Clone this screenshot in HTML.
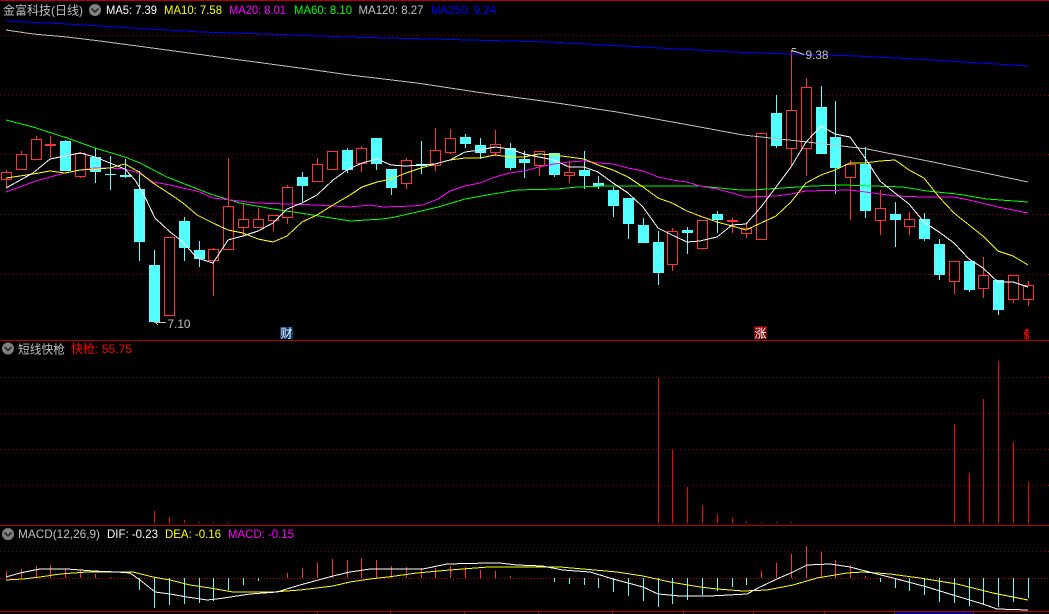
<!DOCTYPE html>
<html lang="zh"><head><meta charset="utf-8"><title>金富科技(日线)</title>
<style>
html,body{margin:0;padding:0;background:#000;width:1049px;height:614px;overflow:hidden}
svg{display:block;position:absolute;left:0;top:0}
text{font-family:"Liberation Sans","Noto Sans CJK SC",sans-serif;font-size:12px}
</style></head><body>
<svg width="1049" height="614" viewBox="0 0 1049 614" xmlns="http://www.w3.org/2000/svg">
<rect width="1049" height="614" fill="#000"/>
<g shape-rendering="crispEdges">
<path d="M0 35.5H1049M0 95.5H1049M0 154.5H1049M0 214.5H1049M0 274.5H1049M0 377.5H1049M0 413.5H1049M0 449.5H1049M0 485.5H1049M0 551.5H1049" stroke="#8a0000" stroke-dasharray="1 3" fill="none"/>
<path d="M0 578.5H1049" stroke="#b40000" stroke-dasharray="1 2" fill="none"/>
<path d="M0 .5H1049M0 340.5H1049M0 525.5H1049M0 611.5H1049" stroke="#b40000" fill="none"/>
<path d="M317.5 612V614M390.5 612V614M464.5 612V614M538.5 612V614M612.5 612V614M683.5 612V614M753.5 612V614M824.5 612V614M894.5 612V614M973.5 612V614" stroke="#b40000" fill="none"/>
<rect x="896" y="612" width="77" height="2" fill="#000080"/>

<!-- red wicks -->
<path fill="none" stroke="#ff3232" d="M6.5 170V188M21.5 151V169M36.5 136V159M50.5 136V158M80.5 152V178M213.5 248V296M228.5 158V249M243.5 203V236M258.5 208V227M273.5 215V231M287.5 185V224M317.5 158V181M361.5 146V172M406.5 158V189M435.5 128V171M450.5 129V154M495.5 130V156M539.5 151V176M569.5 161V183M672.5 228V271M732.5 218V233M746.5 222V238M791.5 50V166M806.5 78V176M850.5 160V220M880.5 190V235M909.5 212V235M954.5 261V294M983.5 257V298M1013.5 275V303M1028.5 281V306"/>
<!-- cyan wicks -->
<path fill="none" stroke="#54ffff" d="M65.5 140V171M95.5 148V183M110.5 156V190M125.5 159V178M139.5 171V261M154.5 250V322M184.5 217V261M199.5 241V267M302.5 172V202M347.5 148V173M376.5 138V170M391.5 169V195M421.5 141V174M465.5 134V148M480.5 138V159M510.5 143V170M524.5 151V178M554.5 153V177M584.5 151V189M598.5 176V189M613.5 187V217M628.5 198V239M643.5 218V243M658.5 231V285M687.5 227V254M717.5 211V233M776.5 95V148M821.5 86V154M835.5 101V194M865.5 147V218M895.5 202V247M924.5 213V241M939.5 239V280M969.5 261V292M998.5 280V315"/>
<!-- red bodies -->
<g fill="#000" stroke="#ff3232">
<rect x="1.5" y="172.5" width="10" height="7"/><rect x="16.5" y="154.5" width="10" height="15"/><rect x="31.5" y="139.5" width="10" height="20"/>
<rect x="75.5" y="153.5" width="10" height="23"/><rect x="164.5" y="237.5" width="10" height="78"/><rect x="208.5" y="249.5" width="10" height="11"/>
<rect x="223.5" y="206.5" width="10" height="43"/><rect x="238.5" y="219.5" width="10" height="8"/><rect x="253.5" y="219.5" width="10" height="8"/>
<rect x="268.5" y="215.5" width="10" height="5"/><rect x="282.5" y="187.5" width="10" height="30"/><rect x="312.5" y="164.5" width="10" height="17"/>
<rect x="327.5" y="151.5" width="10" height="18"/><rect x="356.5" y="148.5" width="10" height="15"/><rect x="401.5" y="160.5" width="10" height="23"/>
<rect x="430.5" y="150.5" width="10" height="15"/><rect x="445.5" y="138.5" width="10" height="14"/><rect x="490.5" y="144.5" width="10" height="8"/>
<rect x="534.5" y="151.5" width="10" height="14"/><rect x="564.5" y="172.5" width="10" height="3"/><rect x="667.5" y="231.5" width="10" height="33"/>
<rect x="697.5" y="220.5" width="10" height="28"/><rect x="741.5" y="228.5" width="10" height="5"/><rect x="756.5" y="133.5" width="10" height="106"/>
<rect x="786.5" y="110.5" width="10" height="38"/><rect x="801.5" y="87.5" width="10" height="61"/><rect x="845.5" y="164.5" width="10" height="13"/>
<rect x="875.5" y="208.5" width="10" height="12"/><rect x="904.5" y="219.5" width="10" height="7"/><rect x="949.5" y="261.5" width="10" height="20"/>
<rect x="978.5" y="275.5" width="10" height="13"/><rect x="1008.5" y="275.5" width="10" height="24"/><rect x="1023.5" y="285.5" width="10" height="14"/>
</g>
<!-- red doji -->
<g fill="#ff3232"><rect x="45" y="144" width="11" height="2"/><rect x="727" y="220" width="11" height="2"/></g>
<!-- cyan bodies -->
<g fill="#54ffff">
<rect x="60" y="141" width="11" height="30"/><rect x="90" y="157" width="11" height="15"/><rect x="105" y="174" width="11" height="1"/>
<rect x="120" y="175" width="11" height="2"/><rect x="134" y="189" width="11" height="53"/><rect x="149" y="265" width="11" height="57"/>
<rect x="179" y="221" width="11" height="27"/><rect x="194" y="250" width="11" height="9"/><rect x="297" y="177" width="11" height="9"/>
<rect x="342" y="150" width="11" height="20"/><rect x="371" y="138" width="11" height="26"/><rect x="386" y="169" width="11" height="19"/>
<rect x="416" y="164" width="11" height="2"/><rect x="460" y="137" width="11" height="7"/><rect x="475" y="145" width="11" height="8"/>
<rect x="505" y="148" width="11" height="20"/><rect x="519" y="159" width="11" height="4"/><rect x="549" y="153" width="11" height="22"/>
<rect x="579" y="170" width="11" height="6"/><rect x="593" y="183" width="11" height="3"/><rect x="608" y="190" width="11" height="16"/>
<rect x="623" y="198" width="11" height="26"/><rect x="638" y="225" width="11" height="18"/><rect x="653" y="242" width="11" height="31"/>
<rect x="682" y="230" width="11" height="3"/><rect x="712" y="214" width="11" height="6"/><rect x="771" y="113" width="11" height="33"/>
<rect x="816" y="107" width="11" height="47"/><rect x="830" y="137" width="11" height="31"/><rect x="860" y="164" width="11" height="47"/>
<rect x="890" y="214" width="11" height="6"/><rect x="919" y="219" width="11" height="20"/><rect x="934" y="244" width="11" height="31"/>
<rect x="964" y="261" width="11" height="29"/><rect x="993" y="280" width="11" height="30"/>
</g>

<!-- main MAs -->
<g fill="none" stroke-width="1">
<polyline stroke="#0000ff" points="6,21 67,24 133,28 200,32 267,34 347,37 430,39 550,42 697,50 733,52 790,54 857,56 933,60 1028,66"/>
<polyline stroke="#c0c0c0" points="6,30 33,34 67,37 100,41 167,50 233,59 300,68 350,75 417,83 483,93 550,102 617,112 700,127 743,135 807,142 867,149 933,162 1028,182"/>
<polyline stroke="#00ff00" points="6,120 33,127 67,138 95,148 125,157 140,163 167,177 200,190 213,195 240,203 273,209 300,213 350,221 383,219 395,217 417,212 438,207 465,199 493,194 517,190 557,189 577,187 607,186 680,186 700,186 720,188 740,190 753,190 783,188 813,186 843,185 873,186 903,187 927,191 957,194 987,199 1028,202"/>
<polyline stroke="#ff00ff" points="6,192 20,187 33,182 50,177 65,173 80,170 95,168 110,168 125,169 139,173 153,182 170,185 183,188 200,192 213,198 257,203 287,204 317,205 350,207 370,205 383,207 413,206 423,205 438,199 450,191 465,186 480,183 495,177 510,173 524,171 539,167 554,164 569,162 584,161 598,163 613,164 628,168 643,171 658,177 672,180 687,182 700,186 717,189 732,193 746,197 776,196 791,194 806,191 850,190 873,193 895,196 924,197 954,197 969,200 998,207 1028,213"/>
<polyline stroke="#ffff00" points="6,178 20,176 33,174 50,171 65,173 80,170 95,169 110,168 125,164 139,172 153,183 170,194 183,203 197,215 213,223 228,230 243,233 258,239 273,242 287,236 302,222 317,215 333,205 350,195 362,187 377,182 391,179 406,173 421,168 435,164 450,160 465,158 480,158 495,155 510,157 524,157 539,154 554,155 569,157 584,159 598,165 613,170 628,177 643,187 658,198 672,203 687,211 700,216 717,222 732,226 746,230 761,223 776,216 791,202 806,183 821,175 835,170 850,163 865,163 880,161 895,160 909,170 924,178 939,197 954,213 969,225 983,236 998,251 1013,256 1028,265"/>
<polyline stroke="#ffffff" points="6,188 33,173 50,159 60,157 80,153 95,157 110,163 125,169 135,180 143,193 155,218 170,232 183,242 197,258 213,263 228,240 243,236 258,231 273,223 287,209 302,203 317,195 333,180 347,170 362,163 377,159 391,165 406,166 421,165 435,164 450,160 465,152 480,150 495,147 510,149 524,154 539,157 554,160 569,167 584,167 598,172 613,183 628,193 643,207 658,228 672,235 687,242 700,241 717,237 732,225 746,224 761,207 776,187 791,167 806,142 821,126 835,134 850,137 865,158 880,181 895,193 909,204 924,222 939,232 954,243 969,259 983,268 998,282 1013,282 1028,287"/>
</g>

<!-- 快枪 bars -->
<path fill="none" stroke="#ff0000" d="M154.5 511V523M169.5 517V523M184.5 520V523M199.5 522V523M213.5 522V523M228.5 522V523M658.5 378V523M672.5 450V523M687.5 487V523M702.5 505V523M717.5 514V523M732.5 518V523M746.5 521V523M761.5 522V523M776.5 522V523M791.5 522V523M954.5 424V523M969.5 473V523M983.5 399V523M998.5 361V523M1013.5 442V523M1028.5 482V523"/>

<!-- MACD bars -->
<path fill="none" stroke="#ff3232" d="M6.5 571V578M21.5 569V578M36.5 566V578M50.5 565V578M65.5 569V578M80.5 570V578M95.5 574V578M110.5 577V578M287.5 573V578M302.5 568V578M317.5 563V578M332.5 559V578M347.5 560V578M361.5 558V578M376.5 560V578M391.5 566V578M406.5 567V578M421.5 568V578M435.5 568V578M450.5 566V578M465.5 567V578M480.5 570V578M495.5 571V578M510.5 576V578M761.5 571V578M776.5 563V578M791.5 554V578M806.5 546V578M821.5 552V578M835.5 560V578M850.5 565V578M865.5 576V578"/>
<path fill="none" stroke="#54ffff" d="M139.5 578V590M154.5 578V608M169.5 578V605M184.5 578V604M199.5 578V603M213.5 578V601M228.5 578V590M243.5 578V585M258.5 578V581M554.5 578V582M569.5 578V584M584.5 578V585M598.5 578V588M613.5 578V592M628.5 578V596M643.5 578V601M658.5 578V607M672.5 578V604M687.5 578V600M702.5 578V595M717.5 578V591M732.5 578V587M746.5 578V585M880.5 578V582M895.5 578V588M909.5 578V591M924.5 578V595M939.5 578V602M954.5 578V603M969.5 578V606M983.5 578V605M998.5 578V607M1013.5 578V602M1028.5 578V598"/>
<g fill="none" stroke-width="1">
<polyline stroke="#ffff00" points="6,580 23,579 40,577 60,574 87,572 133,572 153,577 170,580 190,585 210,588 233,592 273,592 300,590 333,586 350,582 370,579 388,577 417,573 450,570 488,567 560,567 583,569 617,572 643,576 670,582 700,587 717,589 743,591 767,590 793,585 817,578 847,573 863,572 890,574 920,578 957,584 993,593 1028,600"/>
<polyline stroke="#ffffff" points="6,577 20,573 40,569 67,569 93,571 117,572 130,573 140,580 155,592 170,594 187,597 207,600 217,599 250,594 277,592 300,585 333,576 350,572 370,569 383,569 423,569 447,564 488,563 500,563 517,565 542,566 563,570 590,572 613,579 643,587 658,594 680,596 710,596 747,594 760,587 777,579 793,572 807,565 830,564 850,567 873,573 897,579 927,587 953,595 983,604 997,609 1028,610"/>
</g>

<!-- arrows -->
<path d="M154 322.500H166M157 320.500H158M156 321.500H157M156 323.500H157M157 324.500H158" stroke="#c0c0c0" fill="none"/>
<path d="M792 50.500L804 54.500M792 48.500H796M792 49.500V52" stroke="#c0c0c0" fill="none"/>

<!-- badges -->
<rect x="280" y="327" width="13" height="12" fill="#0a3a6e"/>
<rect x="754" y="326" width="13" height="13" fill="#800000"/>
<path d="M1027 328L1029.500 331H1024.500Z" fill="#ff0000"/>
</g>

<!-- toggle icons -->
<g>
<circle cx="95" cy="10" r="6" fill="#808080"/><path d="M91.500 8.500L95 12L98.500 8.500" stroke="#2a2a2a" stroke-width="1.600" fill="none"/>
<circle cx="8" cy="348.500" r="6" fill="#808080"/><path d="M4.500 347L8 350.500L11.500 347" stroke="#2a2a2a" stroke-width="1.600" fill="none"/>
<circle cx="8" cy="534" r="6" fill="#808080"/><path d="M4.500 532.500L8 536L11.500 532.500" stroke="#2a2a2a" stroke-width="1.600" fill="none"/>
</g>

<!-- text -->
<g>
<text x="3" y="14.500" fill="#c0c0c0" textLength="80" lengthAdjust="spacingAndGlyphs">金富科技(日线)</text>
<text x="106" y="14" fill="#ffffff" textLength="51" lengthAdjust="spacingAndGlyphs">MA5: 7.39</text>
<text x="164" y="14" fill="#ffff00" textLength="58" lengthAdjust="spacingAndGlyphs">MA10: 7.58</text>
<text x="229" y="14" fill="#ff00ff" textLength="57" lengthAdjust="spacingAndGlyphs">MA20: 8.01</text>
<text x="294" y="14" fill="#00ff00" textLength="58" lengthAdjust="spacingAndGlyphs">MA60: 8.10</text>
<text x="358.500" y="14" fill="#c0c0c0" textLength="65" lengthAdjust="spacingAndGlyphs">MA120: 8.27</text>
<text x="431" y="14" fill="#0000ff" textLength="65" lengthAdjust="spacingAndGlyphs">MA250: 9.24</text>

<text x="18" y="353.500" fill="#c0c0c0" textLength="47" lengthAdjust="spacingAndGlyphs">短线快枪</text>
<text x="71" y="353" fill="#ff0000" textLength="61" lengthAdjust="spacingAndGlyphs">快枪: 55.75</text>

<text x="18" y="538" fill="#c0c0c0" textLength="82" lengthAdjust="spacingAndGlyphs">MACD(12,26,9)</text>
<text x="107" y="538" fill="#ffffff" textLength="51" lengthAdjust="spacingAndGlyphs">DIF: -0.23</text>
<text x="165" y="538" fill="#ffff00" textLength="56" lengthAdjust="spacingAndGlyphs">DEA: -0.16</text>
<text x="228" y="538" fill="#ff00ff" textLength="66" lengthAdjust="spacingAndGlyphs">MACD: -0.15</text>

<text x="167.500" y="328" fill="#c0c0c0" textLength="23" lengthAdjust="spacingAndGlyphs">7.10</text>
<text x="805.500" y="59" fill="#c0c0c0" textLength="23" lengthAdjust="spacingAndGlyphs">9.38</text>

<text x="280.500" y="337.500" fill="#ffffff" style="font-size:12px">财</text>
<text x="754.500" y="337.500" fill="#ffffff" style="font-size:12px">涨</text>
<text x="1023.500" y="339" fill="#ff0000" style="font-size:11px;font-weight:bold">$</text>
</g>
</svg>
</body></html>
